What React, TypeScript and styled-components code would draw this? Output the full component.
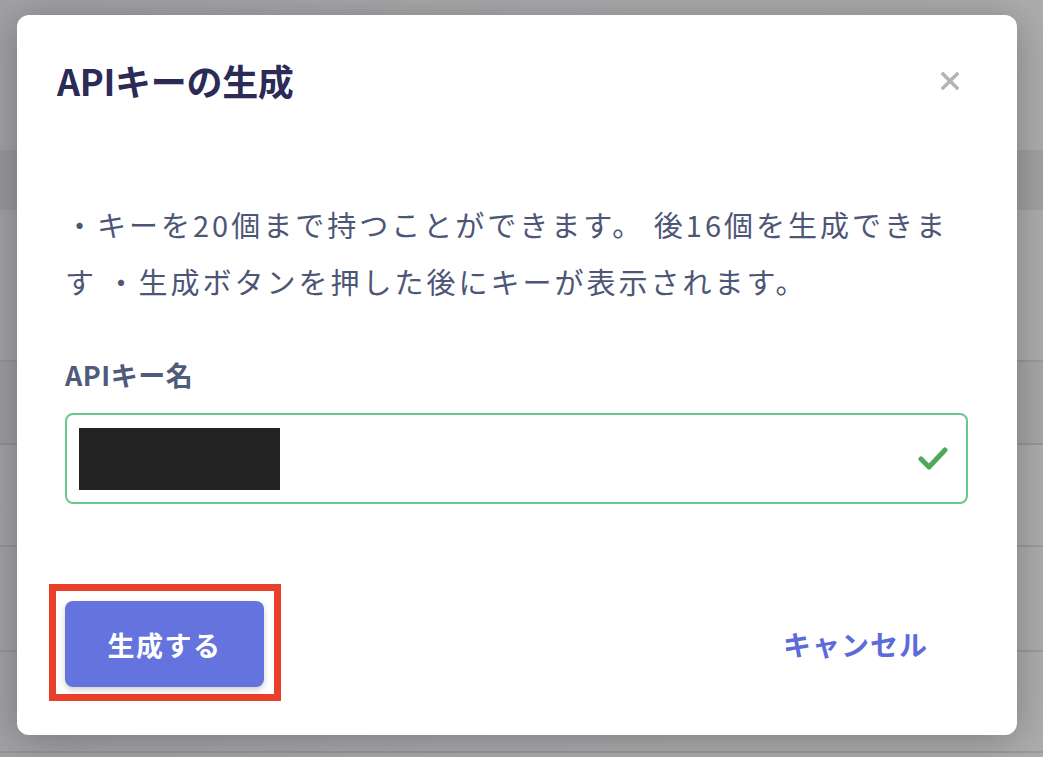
import React, { useState } from "react";
import styled, { createGlobalStyle } from "styled-components";

const GlobalStyle = createGlobalStyle`
    html, body {
        margin: 0;
        padding: 0;
        height: 100%;
    }
    body {
        font-family: "Noto Sans CJK JP", "Noto Sans", sans-serif;
        background: #a9a9ab;
        overflow: hidden;
    }
`

const Page = styled.div`
    position: relative;
    width: 1043px;
    height: 757px;
    overflow: hidden;
    background: linear-gradient(90deg, #a2a2a6 0%, #ababad 50%, #adadad 100%);
`

const TopArea = styled.div`
    height: 150px;
`

const HeaderBand = styled.div`
    height: 60px;
    background: rgba(120, 120, 128, 0.22);
`

const Row = styled.div<{ $height: number; $shade?: boolean }>`
    height: ${(p) => p.$height}px;
    border-bottom: 2px solid rgba(130, 130, 142, 0.45);
    background: ${(p) => (p.$shade ? "rgba(120, 120, 130, 0.12)" : "transparent")};
`

const Overlay = styled.div`
    position: absolute;
    inset: 0;
    display: flex;
    justify-content: center;
    padding-top: 15px;
    box-sizing: border-box;
`

const Modal = styled.div`
    width: 1000px;
    height: 720px;
    margin-left: -9px;
    background: #ffffff;
    border-radius: 12px;
    box-shadow: 0 4px 40px rgba(0, 0, 0, 0.28);
    box-sizing: border-box;
    padding: 45px 49px 0 40px;
    display: flex;
    flex-direction: column;
`

const Header = styled.div`
    display: flex;
    align-items: center;
    justify-content: space-between;
    height: 40px;
`

const Title = styled.h2`
    margin: 0;
    font-size: 36px;
    line-height: 40px;
    font-weight: 700;
    color: #2c2a56;
    letter-spacing: -0.3px;
`

const CloseButton = styled.button`
    border: none;
    background: none;
    padding: 0;
    width: 20px;
    height: 20px;
    margin-right: 8px;
    margin-top: 2px;
    cursor: pointer;
    display: flex;
    align-items: center;
    justify-content: center;
`

const Body = styled.div`
    padding-left: 8px;
    display: flex;
    flex-direction: column;
`

const Description = styled.p`
    margin: 96px 0 0 0;
    width: 903px;
    font-size: 29px;
    line-height: 57px;
    letter-spacing: 3px;
    color: #4d5676;
`

const Label = styled.label`
    margin-top: 50px;
    font-size: 27px;
    line-height: 30px;
    font-weight: 700;
    color: #505a7a;
    letter-spacing: 0.5px;
`

const InputBox = styled.div<{ $valid: boolean }>`
    margin-top: 23px;
    width: 903px;
    height: 91px;
    box-sizing: border-box;
    border: 2px solid ${(p) => (p.$valid ? "#6ac88c" : "#d0d4e0")};
    border-radius: 8px;
    display: flex;
    align-items: center;
    padding: 0 18px 0 12px;
`

const Redacted = styled.div`
    width: 201px;
    height: 62px;
    background: #232323;
`

const Spacer = styled.div`
    flex: 1;
`

const Footer = styled.div`
    margin-top: 80px;
    margin-left: -8px;
    display: flex;
    align-items: center;
    justify-content: space-between;
`

const Highlight = styled.div`
    border: 7px solid #e8402a;
    padding: 10px 10px 7px 9px;
    display: inline-flex;
`

const PrimaryButton = styled.button`
    width: 199px;
    height: 86px;
    border: none;
    border-radius: 8px;
    background: #6473de;
    color: #ffffff;
    font-family: inherit;
    font-size: 27px;
    font-weight: 700;
    letter-spacing: 1.5px;
    box-shadow: 0 3px 6px rgba(0, 0, 0, 0.18);
    cursor: pointer;
`

const TextButton = styled.button`
    border: none;
    background: none;
    padding: 0;
    margin-right: 40px;
    margin-top: 3px;
    font-family: inherit;
    font-size: 28px;
    font-weight: 700;
    color: #5c6bd9;
    letter-spacing: 1px;
    cursor: pointer;
`

const App: React.FC = () => {
    const [name] = useState("my-api-key");
    const valid = name.length > 0;

    return (
        <>
            <GlobalStyle />
            <Page>
                <TopArea />
                <HeaderBand />
                <Row $height={150} />
                <Row $height={81} $shade />
                <Row $height={100} />
                <Row $height={103} />
                <Row $height={99} />
                <Overlay>
                    <Modal>
                        <Header>
                            <Title>APIキーの生成</Title>
                            <CloseButton aria-label="close">
                                <svg width="18" height="18" viewBox="0 0 18 18">
                                    <path d="M2 2 L16 16 M16 2 L2 16" stroke="#b3b3b3" strokeWidth="3.4" strokeLinecap="square" />
                                </svg>
                            </CloseButton>
                        </Header>
                        <Body>
                            <Description>
                                ・キーを20個まで持つことができます。 後16個を生成できます ・生成ボタンを押した後にキーが表示されます。
                            </Description>
                            <Label>APIキー名</Label>
                            <InputBox $valid={valid}>
                                <Redacted />
                                <Spacer />
                                {valid && (
                                    <svg width="30" height="26" viewBox="0 0 30 26">
                                        <path d="M3 13 L11 21 L27 4" fill="none" stroke="#4fa85c" strokeWidth="5" strokeLinecap="round" strokeLinejoin="round" />
                                    </svg>
                                )}
                            </InputBox>
                        </Body>
                        <Footer>
                            <Highlight>
                                <PrimaryButton>生成する</PrimaryButton>
                            </Highlight>
                            <TextButton>キャンセル</TextButton>
                        </Footer>
                    </Modal>
                </Overlay>
            </Page>
        </>
    );
};

export default App;
